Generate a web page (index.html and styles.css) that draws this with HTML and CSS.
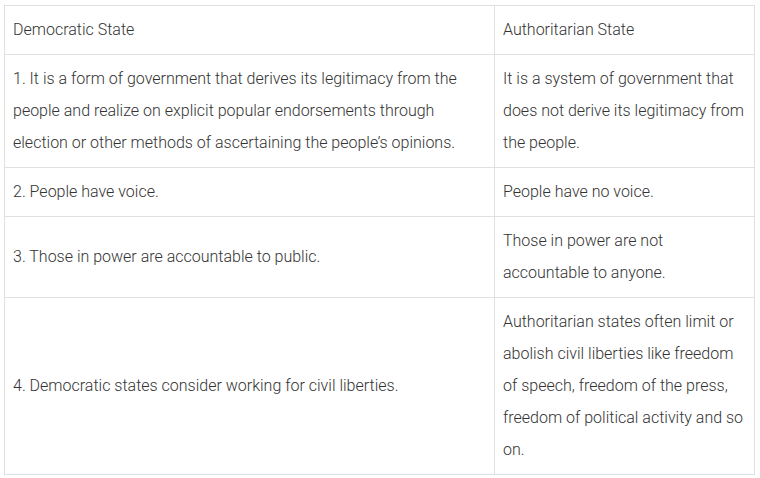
FILE: index.html
```html
<!DOCTYPE html>
<html>
<head>
<meta charset="utf-8">
<link rel="stylesheet" href="styles.css">
</head>
<body>
<div class="wrap">
<table class="cmp">
<tr><td class="c1">Democratic State</td><td class="c2">Authoritarian State</td></tr>
<tr><td class="c1">1. It is a form of government that derives its legitimacy from the people and realize on explicit popular endorsements through election or other methods of ascertaining the people’s opinions.</td><td class="c2">It is a system of government that does not derive its legitimacy from the people.</td></tr>
<tr><td class="c1">2. People have voice.</td><td class="c2">People have no voice.</td></tr>
<tr><td class="c1">3. Those in power are accountable to public.</td><td class="c2">Those in power are not accountable to anyone.</td></tr>
<tr><td class="c1">4. Democratic states consider working for civil liberties.</td><td class="c2">Authoritarian states often limit or abolish civil liberties like freedom of speech, freedom of the press, freedom of political activity and so on.</td></tr>
</table>
</div>
</body>
</html>
```
FILE: styles.css
```css
html, body { margin: 0; padding: 0; background: #fff; }
.wrap { padding: 5px 0 0 4px; }
.cmp {
  border-collapse: collapse;
  width: 751px;
  table-layout: fixed;
  font-family: Roboto, "Liberation Sans", sans-serif;
  font-weight: 300;
  font-size: 16px;
  line-height: 32px;
  color: #333;
}
.cmp td {
  border: 1px solid #e0e0e0;
  padding: 8px 8px;
  vertical-align: middle;
  text-align: left;
}
.c1 { width: 473px; }
.c2 { width: 243px; }
```
